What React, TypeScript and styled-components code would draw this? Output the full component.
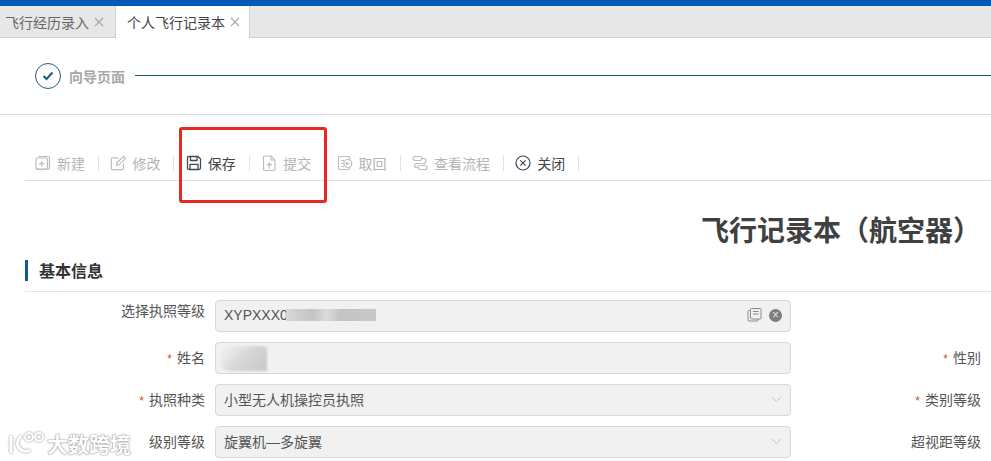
import React from "react";
import styled, { createGlobalStyle } from "styled-components";

const Global = createGlobalStyle`
  html, body {
    margin: 0;
    padding: 0;
    background: #fff;
    overflow: hidden;
  }
  body {
    font-family: "Liberation Sans", "Noto Sans CJK SC", sans-serif;
    font-size: 14px;
    color: #555;
  }
`;

const tools = [
  { key: "new", label: "新建", off: true },
  { key: "edit", label: "修改", off: true },
  { key: "save", label: "保存", off: false },
  { key: "submit", label: "提交", off: true },
  { key: "back", label: "取回", off: true },
  { key: "flow", label: "查看流程", off: true },
  { key: "close", label: "关闭", off: false },
];

const ToolIcon: React.FC<{ name: string }> = ({ name }) => {
  return (
    <svg width="16" height="16" viewBox="0 0 16 16" fill="none" stroke="currentColor" strokeWidth="1.2">
      {name === "new" && (
        <>
          <path d="M3 1.5h10.5a1 1 0 0 1 1 1V13a1 1 0 0 1-1 1H3a1 1 0 0 1-1-1" />
          <rect x="1" y="3" width="11.5" height="11.5" rx="1.5" />
          <path d="M6.7 6v5.5M4 8.7h5.5" />
        </>
      )}
      {name === "edit" && (
        <>
          <path d="M13.5 8.5v5a1.2 1.2 0 0 1-1.2 1.2H2.5a1.2 1.2 0 0 1-1.2-1.2V4a1.2 1.2 0 0 1 1.2-1.2h6" />
          <path d="M6.5 10.3l.5-2.5L13.5 1.3l2 2-6.5 6.5z" />
        </>
      )}
      {name === "save" && (
        <>
          <path d="M2.5 1.5h9.5l2.5 2.5v9a1.5 1.5 0 0 1-1.5 1.5H3A1.5 1.5 0 0 1 1.5 13V2.5a1 1 0 0 1 1-1z" strokeWidth="1.3" />
          <path d="M4.5 1.8v3.7h6.5V1.8M4 14.3V9.3h8v5" strokeWidth="1.3" />
        </>
      )}
      {name === "submit" && (
        <>
          <path d="M10 1H4a1.5 1.5 0 0 0-1.5 1.5v11.5A1.5 1.5 0 0 0 4 15.5h8.500a1.500 1.500 0 0 0 1.500-1.500V5z" />
          <path d="M10 1v4h4M8.300 14V8.500M6 10.500l2.300-2.300 2.300 2.300" />
        </>
      )}
      {name === "back" && (
        <>
          <path d="M12.500 4V2.500a1 1 0 0 0-1-1H2.500a1 1 0 0 0-1 1v11a1 1 0 0 0 1 1h9a1 1 0 0 0 1-1V13" />
          <path d="M4 5.500h3M4 8.500h2M4 11.500h3" />
          <circle cx="10.800" cy="8.500" r="4" />
          <path d="M9 8.500h3.500M10.500 7l-1.500 1.500L10.500 10" />
        </>
      )}
      {name === "flow" && (
        <>
          <rect x="1" y="1.500" width="9" height="4" rx="2" />
          <rect x="6" y="10.500" width="9" height="4" rx="2" />
          <path d="M9 3.500h2.500a2.500 2.500 0 0 1 0 5H4.500a2 2 0 0 0 0 4H6" />
        </>
      )}
      {name === "close" && (
        <>
          <circle cx="8" cy="8" r="7" strokeWidth="1.200" />
          <path d="M5.300 5.300l5.400 5.400M10.700 5.300l-5.400 5.400" strokeWidth="1.200" />
        </>
      )}
    </svg>
  );
};

const Chevron = () => (
  <svg width="11" height="7" viewBox="0 0 11 7" fill="none" stroke="#c4c4c4" strokeWidth="1">
    <path d="M1 1l4.500 4.500L10 1" />
  </svg>
);

const CloseMark = () => (
  <svg width="10" height="10" viewBox="0 0 10 10" fill="none" stroke="#a6a6a6" strokeWidth="1.1">
    <path d="M1 1l8 8M9 1l-8 8" />
  </svg>
);

const App: React.FC = () => {
  return (
    <Page>
      <Global />
      <TopBar />
      <TabBar>
        <Tab>
          飞行经历录入
          <CloseMark />
        </Tab>
        <Tab $active>
          个人飞行记录本
          <CloseMark />
        </Tab>
      </TabBar>

      <Wizard>
        <StepCircle>
          <svg width="12" height="10" viewBox="0 0 12 10" fill="none" stroke="#1d5a80" strokeWidth="2">
            <path d="M1.500 5l3 3 6-6.500" />
          </svg>
        </StepCircle>
        <StepText>向导页面</StepText>
        <StepLine />
      </Wizard>

      <Toolbar>
        {tools.map((t) => (
          <ToolItem key={t.key} $off={t.off}>
            <ToolIcon name={t.key} />
            <span>{t.label}</span>
          </ToolItem>
        ))}
      </Toolbar>

      <Title>飞行记录本（航空器）</Title>

      <SectionHead>
        <SectionText>基本信息</SectionText>
      </SectionHead>

      <Form>
        <Row>
          <Label $top>选择执照等级</Label>
          <Field>
            <FieldText>XYPXXX0</FieldText>
            <BlurBar />
            <FieldIcons>
              <svg width="15" height="14" viewBox="0 0 15 14" fill="none" stroke="#888" strokeWidth="1">
                <path d="M3.500 2.500H2a1 1 0 0 0-1 1V12a1 1 0 0 0 1 1h8a1 1 0 0 0 1-1v-1" />
                <rect x="3.500" y="0.500" width="10.500" height="10.500" rx="1" />
                <path d="M6 3.500h5.500M6 6h5.500" />
              </svg>
              <ClearDot>×</ClearDot>
            </FieldIcons>
          </Field>
          <Label />
        </Row>
        <Row>
          <Label>
            <Star>*</Star>姓名
          </Label>
          <Field>
            <BlurName />
          </Field>
          <Label>
            <Star>*</Star>性别
          </Label>
        </Row>
        <Row>
          <Label>
            <Star>*</Star>执照种类
          </Label>
          <Field>
            <FieldText>小型无人机操控员执照</FieldText>
            <FieldIcons>
              <Chevron />
            </FieldIcons>
          </Field>
          <Label>
            <Star>*</Star>类别等级
          </Label>
        </Row>
        <Row>
          <Label>级别等级</Label>
          <Field>
            <FieldText>旋翼机—多旋翼</FieldText>
            <FieldIcons>
              <Chevron />
            </FieldIcons>
          </Field>
          <Label>超视距等级</Label>
        </Row>
      </Form>

      <RedBox />
      <Watermark>
        <svg width="38" height="26" viewBox="0 0 38 26" fill="none" stroke="#fff" strokeWidth="3">
          <path d="M3 6v17M13 6c-4 4-5 9-1 13 3 3 7 3 10 1" />
          <circle cx="21" cy="7" r="4" strokeWidth="2" />
          <circle cx="31" cy="7" r="4" strokeWidth="2" />
        </svg>
        <span>大数跨境</span>
      </Watermark>
    </Page>
  );
};

export default App;

const Page = styled.div`
  position: relative;
  width: 991px;
  height: 461px;
  overflow: hidden;
`;

const TopBar = styled.div`
  height: 6px;
  background: #0059b9;
`;

const TabBar = styled.div`
  display: flex;
  height: 32px;
  background: #e7e7e7;
  border-bottom: 1px solid #cfcfcf;
  box-sizing: border-box;
`;

const Tab = styled.div<{ $active?: boolean }>`
  display: flex;
  align-items: center;
  gap: 5px;
  box-sizing: border-box;
  height: ${(p) => (p.$active ? "32px" : "31px")};
  padding-left: ${(p) => (p.$active ? "11px" : "5px")};
  width: ${(p) => (p.$active ? "135px" : "115px")};
  background: ${(p) => (p.$active ? "#fff" : "transparent")};
  border-left: ${(p) => (p.$active ? "1px solid #cfcfcf" : "none")};
  border-right: ${(p) => (p.$active ? "1px solid #cfcfcf" : "none")};
  color: ${(p) => (p.$active ? "#444" : "#666")};
  font-size: 14px;
  white-space: nowrap;
`;

const Wizard = styled.div`
  display: flex;
  align-items: center;
  height: 77px;
  padding: 0 0 1px 35px;
  box-sizing: border-box;
  border-bottom: 1px solid #d8d8d8;
`;

const StepCircle = styled.div`
  display: flex;
  align-items: center;
  justify-content: center;
  box-sizing: border-box;
  width: 26px;
  height: 26px;
  border: 1px solid #1d5a80;
  border-radius: 50%;
`;

const StepText = styled.span`
  margin-left: 8px;
  width: 66px;
  flex: none;
  font-size: 14px;
  font-weight: bold;
  color: #a8a8a8;
`;

const StepLine = styled.div`
  flex: 1;
  height: 1px;
  background: #1d5a70;
`;

const Toolbar = styled.div`
  display: flex;
  align-items: center;
  gap: 11.4px;
  box-sizing: border-box;
  height: 66px;
  margin-left: 25px;
  padding: 30px 0 0 10px;
  border-bottom: 1px solid #e0e0e0;
`;

const ToolItem = styled.div<{ $off: boolean }>`
  display: flex;
  align-items: center;
  gap: 6px;
  box-sizing: border-box;
  height: 16px;
  padding-right: 13px;
  border-right: 1px solid #e2e2e2;
  flex: none;
  font-size: 14px;
  color: ${(p) => (p.$off ? "#b4b4b4" : "#444")};

  svg {
    color: ${(p) => (p.$off ? "#bdbdbd" : "#3f4a55")};
    flex: none;
  }
`;

const Title = styled.div`
  height: 79px;
  box-sizing: border-box;
  padding: 33px 10px 0 0;
  text-align: right;
  font-size: 28px;
  line-height: 36px;
  font-weight: bold;
  color: #404040;
`;

const SectionHead = styled.div`
  height: 32px;
  margin-left: 25px;
  box-sizing: border-box;
  border-bottom: 1px solid #e6e6e6;
`;

const SectionText = styled.div`
  height: 21px;
  line-height: 23px;
  padding-left: 11px;
  border-left: 3px solid #0f5a8e;
  font-size: 16px;
  font-weight: bold;
  color: #333;
`;

const Form = styled.div`
  display: flex;
  flex-direction: column;
  gap: 10px;
  padding: 8px 0 0 25px;
`;

const Row = styled.div`
  display: grid;
  grid-template-columns: 180px 576px 180px;
  column-gap: 10px;
  height: 32px;
`;

const Label = styled.div<{ $top?: boolean }>`
  text-align: right;
  font-size: 14px;
  line-height: ${(p) => (p.$top ? "22px" : "32px")};
  color: #555;
`;

const Star = styled.span`
  color: #d2522c;
  margin-right: 5px;
  font-size: 12px;
`;

const Field = styled.div`
  position: relative;
  display: flex;
  align-items: center;
  box-sizing: border-box;
  height: 32px;
  padding: 0 8px 2px;
  background: #f1f1f1;
  border: 1px solid #d9d9d9;
  border-radius: 4px;
`;

const FieldText = styled.span`
  font-size: 14px;
  color: #555;
`;

const BlurBar = styled.div`
  width: 90px;
  height: 12px;
  margin-left: -2px;
  background: linear-gradient(90deg, #d8d8d8, #c4c4c4 30%, #dcdcdc 45%, #c4c4c4 60%, #c8c8c8);
`;

const BlurName = styled.div`
  width: 46px;
  height: 25px;
  margin: 2px 0 0 -3px;
  border-radius: 9px 4px 0 9px;
  background: linear-gradient(135deg, #ececec 15%, #d6d6d6 50%, #c8c8c8);
  filter: blur(1px);
`;

const FieldIcons = styled.div`
  display: flex;
  align-items: center;
  gap: 7px;
  margin-left: auto;
`;

const ClearDot = styled.span`
  display: flex;
  align-items: center;
  justify-content: center;
  width: 13px;
  height: 13px;
  border-radius: 50%;
  background: #7d7d7d;
  color: #e2e2e2;
  font-size: 12px;
  line-height: 1;
`;

const RedBox = styled.div`
  position: absolute;
  left: 179px;
  top: 127px;
  width: 148px;
  height: 76px;
  box-sizing: border-box;
  border: 3px solid #e52a20;
  border-radius: 3px;
`;

const Watermark = styled.div`
  position: absolute;
  left: 8px;
  top: 428px;
  display: flex;
  align-items: center;
  gap: 1px;
  color: #fff;
  font-size: 21px;
  font-weight: bold;
  text-shadow: 0 0 2px #8a8a8a, 0 0 1px #8a8a8a;

  svg {
    filter: drop-shadow(0 0 1px #888);
  }
`;
